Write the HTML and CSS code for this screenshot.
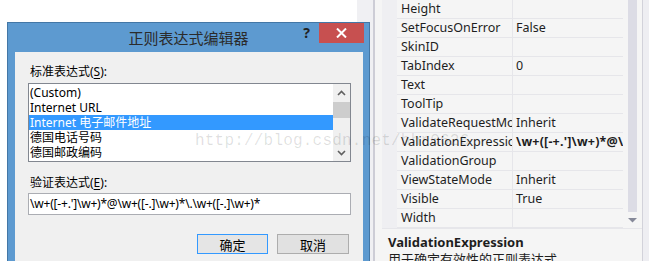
FILE: index.html
```html
<!DOCTYPE html>
<html lang="zh-CN">
<head>
  <meta charset="UTF-8" />
  <title>正则表达式编辑器</title>
  <link rel="stylesheet" href="styles.css">
</head>
<body>
  <div class="screen">
    <div class="designer"></div>
    <div class="gutter"></div>
    <div class="splitter"></div>

    <div class="props">
      <div class="props-frame">
        <div class="grid-area">
          <div class="grid-margin"></div>
          <div class="grid">
            <div class="row"><div class="name">Height</div><div class="value"></div></div>
            <div class="row"><div class="name">SetFocusOnError</div><div class="value">False</div></div>
            <div class="row"><div class="name">SkinID</div><div class="value"></div></div>
            <div class="row"><div class="name">TabIndex</div><div class="value">0</div></div>
            <div class="row"><div class="name">Text</div><div class="value"></div></div>
            <div class="row"><div class="name">ToolTip</div><div class="value"></div></div>
            <div class="row"><div class="name">ValidateRequestMode</div><div class="value">Inherit</div></div>
            <div class="row"><div class="name">ValidationExpression</div><div class="value bold">\w+([-+.']\w+)*@\w+([-.]\w+)*\.\w+([-.]\w+)*</div></div>
            <div class="row"><div class="name">ValidationGroup</div><div class="value"></div></div>
            <div class="row"><div class="name">ViewStateMode</div><div class="value">Inherit</div></div>
            <div class="row"><div class="name">Visible</div><div class="value">True</div></div>
            <div class="row"><div class="name">Width</div><div class="value"></div></div>
          </div>
          <div class="vscroll">
            <div class="vtrack"></div>
            <svg class="varrow" width="9" height="6" viewBox="0 0 9 6"><polygon points="0,1 9,1 4.5,5.5" fill="#868999"/></svg>
          </div>
        </div>
        <div class="desc">
          <div class="desc-title">ValidationExpression</div>
          <div class="desc-text">用于确定有效性的正则表达式。</div>
        </div>
      </div>
      <div class="props-edge"></div>
    </div>

    <div class="dialog">
      <div class="titlebar">
        <div></div>
        <div class="title">正则表达式编辑器</div>
        <div class="controls">
          <span class="help">?</span>
          <span class="close">
            <svg width="11" height="10" viewBox="0 0 11 10"><path d="M1 0.5 L10 9.5 M10 0.5 L1 9.5" stroke="#fff" stroke-width="2"/></svg>
          </span>
        </div>
      </div>
      <div class="dialog-body">
        <div class="label">标准表达式(<u>S</u>):</div>
        <div class="listbox">
          <div class="items">
            <div class="item">(Custom)</div>
            <div class="item">Internet URL</div>
            <div class="item selected">Internet 电子邮件地址</div>
            <div class="item">德国电话号码</div>
            <div class="item">德国邮政编码</div>
          </div>
          <div class="lscroll">
            <div class="lbtn">
              <svg width="9" height="6" viewBox="0 0 9 6"><polyline points="1,5 4.5,1.5 8,5" fill="none" stroke="#606060" stroke-width="1.6"/></svg>
            </div>
            <div class="lthumb"></div>
            <div class="lspace"></div>
            <div class="lbtn">
              <svg width="9" height="6" viewBox="0 0 9 6"><polyline points="1,1 4.5,4.5 8,1" fill="none" stroke="#606060" stroke-width="1.6"/></svg>
            </div>
          </div>
        </div>
        <div class="label second">验证表达式(<u>E</u>):</div>
        <div class="textbox">\w+([-+.']\w+)*@\w+([-.]\w+)*\.\w+([-.]\w+)*</div>
        <div class="buttons">
          <div class="btn default">确定</div>
          <div class="btn">取消</div>
        </div>
      </div>
    </div>

    <div class="watermark">http://blog.csdn.net/hhr0626</div>
  </div>
</body>
</html>
```

FILE: styles.css
```css
:root {
  --ui-font: "Noto Sans", "Noto Sans CJK SC", sans-serif;
  --frame: #5d9ad0;
  --frame-edge: #4377a6;
  --face: #f0f0f0;
  --grid-bg: #f5f5f5;
  --grid-line: #e6e6ea;
}

body {
  margin: 0;
  font-family: var(--ui-font);
  background: #fff;
}

.screen {
  position: relative;
  display: flex;
  width: 649px;
  height: 261px;
  overflow: hidden;
}

.designer {
  width: 357px;
  background: #fff;
}

.gutter {
  width: 16px;
  background: #f0f0f3;
}

.splitter {
  width: 2px;
  background: #cdcdd6;
}

/* property grid */
.props {
  flex: 1;
  display: flex;
  background: var(--grid-bg);
  padding-left: 7px;
}

.props-frame {
  width: 260px;
  border-right: 1px solid #d2d2da;
  display: flex;
  flex-direction: column;
}

.props-edge {
  flex: 1;
  background: #eeeef2;
}

.grid-area {
  display: flex;
  height: 228px;
  border-bottom: 1px solid var(--grid-line);
}

.grid-margin {
  width: 15px;
  background: #efeff2;
}

.grid {
  width: 226px;
  font-size: 12.5px;
  color: #1e1e1e;
}

.row {
  display: flex;
  height: 18px;
  line-height: 18px;
  border-bottom: 1px solid var(--grid-line);
}

.name {
  width: 116px;
  box-sizing: border-box;
  padding-left: 4px;
  border-right: 1px solid var(--grid-line);
  white-space: nowrap;
  overflow: hidden;
}

.value {
  flex: 1;
  padding-left: 3px;
  white-space: nowrap;
  overflow: hidden;
}

.value.bold {
  font-weight: bold;
  letter-spacing: 0.2px;
}

.vscroll {
  width: 9px;
  margin: 0 5px;
  display: flex;
  flex-direction: column;
  align-items: center;
}

.vtrack {
  width: 9px;
  height: 212px;
  background: #dcdce5;
}

.varrow {
  margin-top: 5px;
}

.desc {
  flex: 1;
  padding: 5px 0 0 6px;
}

.desc-title {
  font-size: 13px;
  font-weight: bold;
  color: #1e1e1e;
  line-height: 17px;
}

.desc-text {
  font-size: 13px;
  line-height: 17px;
  color: #1e1e1e;
}

/* dialog window */
.dialog {
  position: absolute;
  left: 7px;
  top: 22px;
  width: 363px;
  height: 260px;
  box-sizing: border-box;
  background: var(--frame);
  border: 1px solid var(--frame-edge);
}

.titlebar {
  display: grid;
  grid-template-columns: 1fr auto 1fr;
  height: 29px;
}

.title {
  font-size: 15px;
  line-height: 30px;
  color: #2b2b2b;
}

.controls {
  justify-self: end;
  display: flex;
  align-items: flex-start;
  margin-right: 5px;
}

.help {
  font-size: 14px;
  font-weight: bold;
  line-height: 18px;
  margin-top: 1px;
  margin-right: 9px;
  color: #222;
}

.close {
  width: 45px;
  height: 20px;
  background: #c75050;
  display: flex;
  align-items: center;
  justify-content: center;
}

.dialog-body {
  margin: 0 6px 0 7px;
  height: 240px;
  background: var(--face);
  padding: 12px 12px 0 13px;
  font-size: 12px;
  color: #000;
}

.label {
  padding-left: 2px;
  line-height: 16px;
  margin-bottom: 3px;
}

.label.second {
  margin-top: 13px;
  margin-bottom: 2px;
}

.label u {
  text-underline-offset: 2px;
}

.listbox {
  display: flex;
  height: 77px;
  border: 1px solid #828790;
  background: #fff;
}

.items {
  flex: 1;
  padding-top: 1px;
  overflow: hidden;
}

.item {
  height: 15px;
  line-height: 15px;
  padding-left: 1px;
  white-space: nowrap;
}

.item.selected {
  background: #3399ff;
  color: #fff;
}

.lscroll {
  width: 17px;
  background: #f0f0f0;
  display: flex;
  flex-direction: column;
}

.lbtn {
  height: 17px;
  display: flex;
  align-items: center;
  justify-content: center;
}

.lthumb {
  height: 16px;
  margin-top: 1px;
  background: #cdcdcd;
}

.lspace {
  flex: 1;
}

.textbox {
  height: 20px;
  line-height: 20px;
  border: 1px solid #abadb3;
  background: #fff;
  padding-left: 1px;
  letter-spacing: -0.2px;
  white-space: nowrap;
  overflow: hidden;
}

.buttons {
  display: flex;
  justify-content: flex-end;
  gap: 9px;
  margin-top: 19px;
  padding-right: 2px;
}

.btn {
  width: 72px;
  height: 20px;
  line-height: 20px;
  box-sizing: border-box;
  border: 1px solid #adadad;
  background: #e1e1e1;
  text-align: center;
  font-size: 13px;
}

.btn.default {
  width: 71px;
  border-color: #3399ff;
  background: #e5e5e5;
}

.watermark {
  position: absolute;
  left: 195px;
  top: 132px;
  font-family: "Liberation Mono", monospace;
  font-size: 16px;
  letter-spacing: 0.2px;
  color: rgba(0, 0, 0, 0.13);
  white-space: nowrap;
  pointer-events: none;
}
```
